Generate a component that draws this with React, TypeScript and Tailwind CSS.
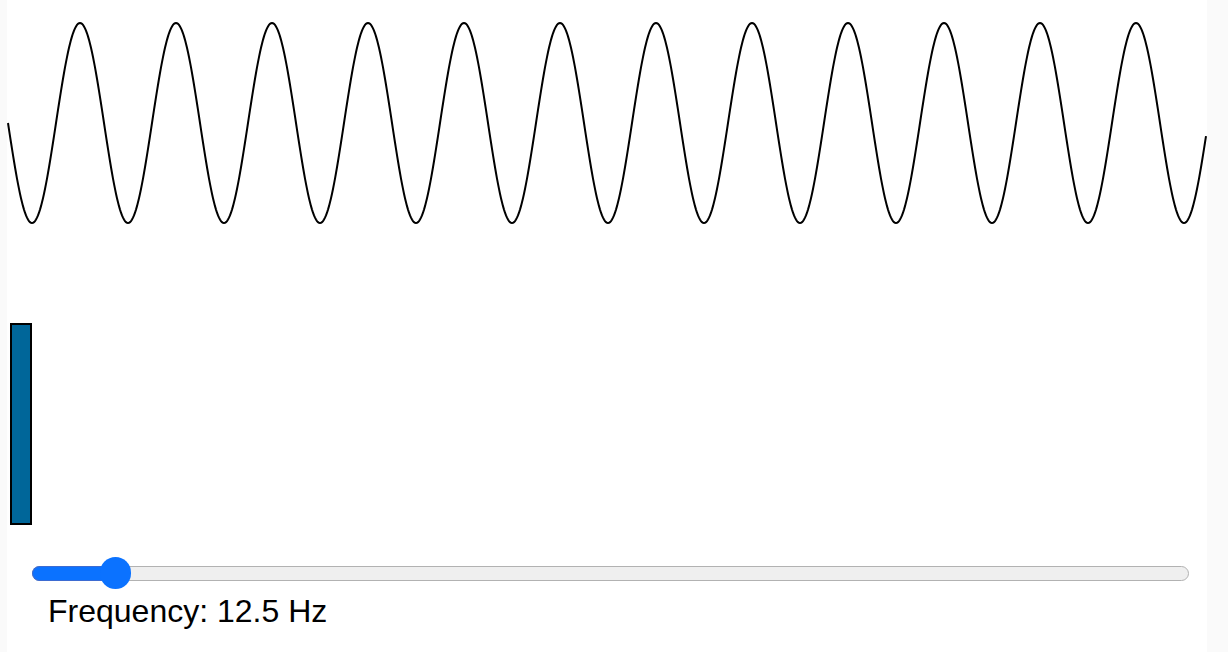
import { useMemo } from "react";

const WIDTH = 1200;
const MID = 123;
const AMP = 100;
const FREQ = 12.5;
const MIN = 0.5;
const MAX = 200;
const TRACK_W = 1157;
const THUMB = 31;

function wavePath() {
  const pts: string[] = [];
  for (let x = 0; x <= WIDTH - 2; x += 1) {
    const y = MID + AMP * Math.sin((2 * Math.PI * FREQ * x) / WIDTH);
    pts.push(`${x === 0 ? "M" : "L"}${x + 1} ${y.toFixed(2)}`);
  }
  return pts.join(" ");
}

export default function App() {
  const d = useMemo(wavePath, []);
  const frac = (FREQ - MIN) / (MAX - MIN);
  const thumbCenter = THUMB / 2 + frac * (TRACK_W - THUMB);

  return (
    <div className="min-h-screen bg-[#fafafa]">
      <div className="ml-[7px] w-[1200px] h-[652px] bg-white flex flex-col">
        {/* Wave */}
        <svg width={WIDTH} height={250} className="block shrink-0">
          <path d={d} fill="none" stroke="#000" strokeWidth={2} />
        </svg>

        {/* Amplitude bar */}
        <div className="mt-[73px] ml-[3px] w-[22px] h-[202px] bg-[#006699] border-2 border-black" />

        {/* Slider */}
        <div className="mt-[32px] ml-[25px] w-[1157px] h-[32px] relative flex items-center">
          <div className="w-full h-[15px] rounded-full border-[1.5px] border-[#b2b2b2] bg-[#efefef]" />
          <div
            className="absolute left-0 h-[15px] rounded-l-full border-[1.5px] border-r-0 border-[#3d6bd1] bg-[#0b72ff]"
            style={{ width: thumbCenter }}
          />
          <div
            className="absolute top-0 w-[31px] h-[32px] rounded-full bg-[#0b72ff]"
            style={{ left: thumbCenter - THUMB / 2 }}
          />
        </div>

        <div className="mt-[4px] pl-[41px] text-[32px] leading-[36px] text-black font-['Liberation_Sans',Arial,sans-serif]">
          Frequency: {FREQ} Hz
        </div>
      </div>
    </div>
  );
}
